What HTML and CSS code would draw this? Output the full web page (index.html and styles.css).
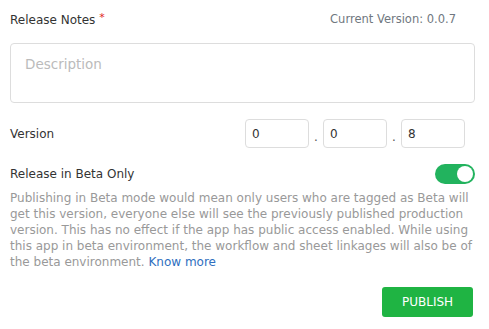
FILE: index.html
```html
<!DOCTYPE html>
<html lang="en">
<head>
<meta charset="UTF-8">
<title>Publish App</title>
<link rel="stylesheet" href="styles.css">
</head>
<body>
<div class="publish-panel">
    <div class="notes-head">
        <span class="label">Release Notes <span class="required">*</span></span>
        <span class="current-version">Current Version: 0.0.7</span>
    </div>
    <textarea class="notes-input" placeholder="Description"></textarea>

    <div class="version-row">
        <span class="label">Version</span>
        <div class="version-fields">
            <input type="text" class="version-input" value="0">
            <span class="dot">.</span>
            <input type="text" class="version-input" value="0">
            <span class="dot">.</span>
            <input type="text" class="version-input" value="8">
        </div>
    </div>

    <div class="beta-row">
        <span class="label">Release in Beta Only</span>
        <div class="toggle on"><div class="knob"></div></div>
    </div>
    <p class="beta-help">Publishing in Beta mode would mean only users who are tagged as Beta will get this version, everyone else will see the previously published production version. This has no effect if the app has public access enabled. While using this app in beta environment, the workflow and sheet linkages will also be of the beta environment. <a href="#">Know more</a></p>

    <div class="actions">
        <button class="publish-btn">PUBLISH</button>
    </div>
</div>
</body>
</html>
```

FILE: styles.css
```css
body {
    margin: 0;
    background: #fff;
    font-family: "DejaVu Sans", sans-serif;
    color: #333;
}
.publish-panel {
    padding: 10px 14px 0 10px;
}
.label {
    font-size: 12px;
    color: #333;
}
.required {
    color: #e02020;
    font-size: 11px;
    vertical-align: 3px;
}
.notes-head {
    display: flex;
    justify-content: space-between;
    align-items: center;
    height: 17px;
    padding-right: 19px;
}
.current-version {
    font-size: 11.5px;
    color: #707880;
}
.notes-input {
    display: block;
    box-sizing: border-box;
    width: 100%;
    height: 60px;
    margin-top: 16px;
    border: 1px solid #ddd;
    border-radius: 4px;
    padding: 12px 14px;
    resize: none;
    font-family: inherit;
    font-size: 13.5px;
    outline: none;
}
.notes-input::placeholder {
    color: #bbb;
}
.version-row {
    display: flex;
    justify-content: space-between;
    align-items: center;
    margin-top: 16px;
    padding-right: 10px;
}
.version-fields {
    display: flex;
    align-items: center;
}
.version-input {
    box-sizing: border-box;
    width: 64px;
    height: 29px;
    border: 1px solid #ddd;
    border-radius: 4px;
    padding: 0 6px;
    font-family: inherit;
    font-size: 12px;
    color: #333;
    outline: none;
}
.dot {
    width: 14px;
    text-align: center;
    font-size: 12px;
    color: #555;
    padding-top: 6px;
}
.beta-row {
    display: flex;
    justify-content: space-between;
    align-items: center;
    margin-top: 16px;
}
.toggle {
    width: 40px;
    height: 20px;
    border-radius: 10px;
    background: #ccc;
    display: flex;
    align-items: center;
    padding: 0 2px;
    box-sizing: border-box;
}
.toggle.on {
    background: #22b35e;
    justify-content: flex-end;
}
.knob {
    width: 16px;
    height: 16px;
    border-radius: 50%;
    background: #fff;
}
.beta-help {
    margin: 6px 0 0;
    font-size: 12px;
    line-height: 16px;
    color: #999;
}
.beta-help a {
    color: #2f6fc0;
    text-decoration: none;
}
.actions {
    display: flex;
    justify-content: flex-end;
    margin-top: 17px;
    padding-right: 2px;
}
.publish-btn {
    width: 91px;
    height: 30px;
    border: none;
    border-radius: 3px;
    background: #1fb443;
    color: #fff;
    font-family: inherit;
    font-size: 12px;
    cursor: pointer;
}
```
